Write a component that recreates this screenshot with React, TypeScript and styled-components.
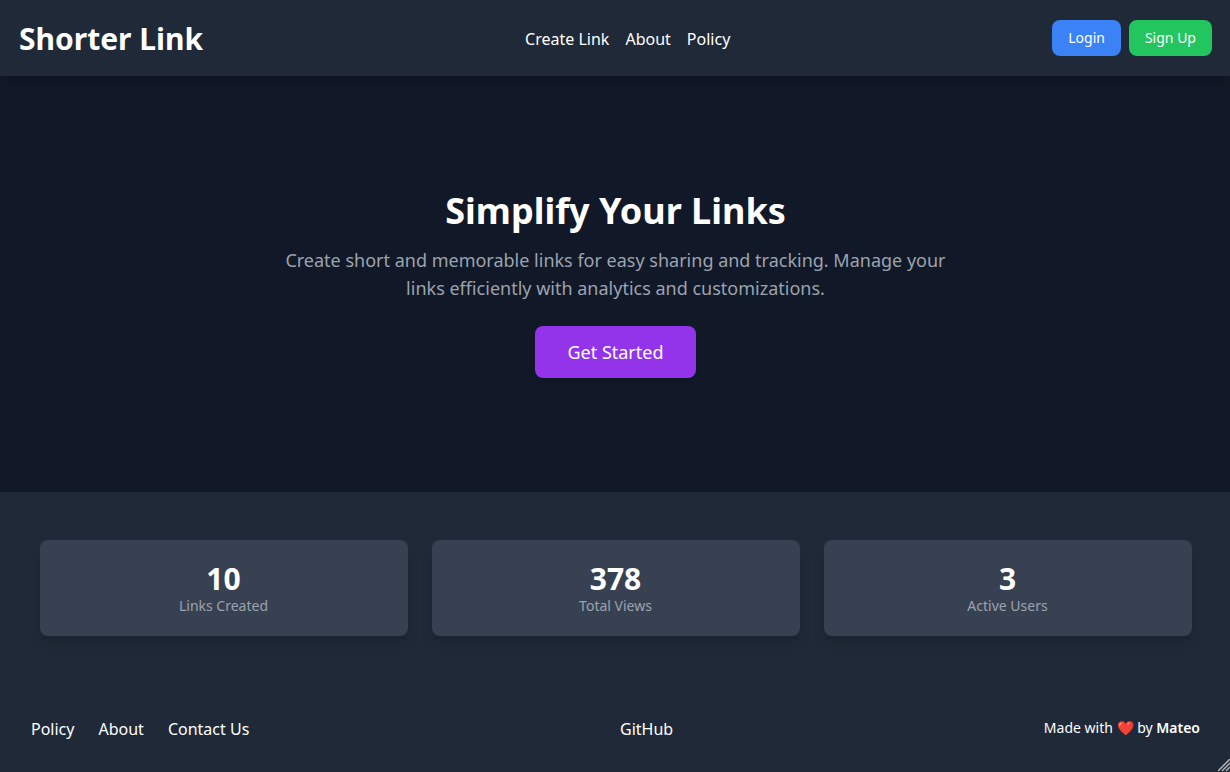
import React from "react";
import styled, { createGlobalStyle, css } from "styled-components";

const GlobalStyle = createGlobalStyle`
  *, *::before, *::after { box-sizing: border-box; }
  body {
    margin: 0;
    background: #111827;
    color: #ffffff;
    font-family: "Noto Sans", sans-serif;
    font-size: 16px;
    line-height: 24px;
  }
  h1, h2, p, dl, dt, dd { margin: 0; }
`;

const shadowLarge = "0 10px 15px -3px rgba(0, 0, 0, 0.1), 0 4px 6px -4px rgba(0, 0, 0, 0.1)";
const shadowMedium = "0 4px 6px -1px rgba(0, 0, 0, 0.1), 0 2px 4px -2px rgba(0, 0, 0, 0.1)";

const displayText = css`
  padding-top: 2px;
  font-size: 30px;
  line-height: 34px;
  font-weight: 700;
`;

const Page = styled.div`
  position: relative;
  display: flex;
  flex-direction: column;
  min-height: 100vh;
`;

const Header = styled.header`
  display: flex;
  align-items: center;
  justify-content: space-between;
  padding: 20px 18px 20px 19px;
  background: #1f2937;
  box-shadow: ${shadowLarge};
`;

const Logo = styled.h1`
  ${displayText}
`;

const LinkRow = styled.nav<{ $gap: number }>`
  display: flex;
  gap: ${(p) => p.$gap}px;
`;

const TextLink = styled.a`
  display: block;
  padding-top: 2px;
  color: inherit;
  text-decoration: none;
`;

const Actions = styled.div`
  display: flex;
  gap: 8px;
`;

const Button = styled.button<{ $color: string; $large?: boolean }>`
  border: 0;
  border-radius: 8px;
  padding: ${(p) => (p.$large ? "12px 32px" : "8px 16px")};
  background: ${(p) => p.$color};
  color: #ffffff;
  font-family: inherit;
  font-size: ${(p) => (p.$large ? 18 : 14)}px;
  line-height: ${(p) => (p.$large ? 28 : 20)}px;
  box-shadow: ${(p) => (p.$large ? shadowMedium : "none")};
  cursor: pointer;
`;

const Hero = styled.main`
  flex: 1;
  display: flex;
  flex-direction: column;
  align-items: center;
  justify-content: center;
  padding: 64px 24px 64px 25px;
  text-align: center;
`;

const HeroTitle = styled.h2`
  ${displayText}
  margin-bottom: 16px;
  font-size: 36px;
  line-height: 38px;
`;

const HeroText = styled.p`
  max-width: 672px;
  margin-bottom: 24px;
  color: #9ca3af;
  font-size: 18px;
  line-height: 28px;
`;

const Stats = styled.section`
  padding: 48px 24px 48px 25px;
  background: #1f2937;
`;

const StatGrid = styled.dl`
  display: grid;
  grid-template-columns: repeat(3, 1fr);
  gap: 24px;
  max-width: 1152px;
  margin: 0 auto;
`;

const StatCard = styled.div`
  display: flex;
  flex-direction: column-reverse;
  padding: 20px;
  border-radius: 8px;
  background: #374151;
  box-shadow: ${shadowLarge};
  text-align: center;
`;

const StatValue = styled.dd`
  ${displayText}
`;

const StatLabel = styled.dt`
  color: #9ca3af;
  font-size: 14px;
  line-height: 20px;
`;

const Footer = styled.footer`
  display: flex;
  align-items: center;
  justify-content: space-between;
  padding: 31px 30px 31px 31px;
  background: #1f2937;
`;

const Credit = styled.p`
  font-size: 14px;
  line-height: 20px;

  strong { font-weight: 600; }
`;

const ResizeGrip = styled.svg`
  position: absolute;
  right: 0;
  bottom: 0;
`;

const stats = [
  { value: "10", label: "Links Created" },
  { value: "378", label: "Total Views" },
  { value: "3", label: "Active Users" },
];

export default function App() {
  return (
    <Page>
      <GlobalStyle />
      <Header>
        <Logo>Shorter Link</Logo>
        <LinkRow $gap={16} aria-label="Main">
          <TextLink href="#create">Create Link</TextLink>
          <TextLink href="#about">About</TextLink>
          <TextLink href="#policy">Policy</TextLink>
        </LinkRow>
        <Actions>
          <Button type="button" $color="#3b82f6">Login</Button>
          <Button type="button" $color="#22c55e">Sign Up</Button>
        </Actions>
      </Header>
      <Hero>
        <HeroTitle>Simplify Your Links</HeroTitle>
        <HeroText>
          Create short and memorable links for easy sharing and tracking. Manage your links
          efficiently with analytics and customizations.
        </HeroText>
        <Button type="button" $color="#9333ea" $large>Get Started</Button>
      </Hero>
      <Stats>
        <StatGrid>
          {stats.map((s) => (
            <StatCard key={s.label}>
              <StatLabel>{s.label}</StatLabel>
              <StatValue>{s.value}</StatValue>
            </StatCard>
          ))}
        </StatGrid>
      </Stats>
      <Footer>
        <LinkRow $gap={24} aria-label="Footer">
          <TextLink href="#policy">Policy</TextLink>
          <TextLink href="#about">About</TextLink>
          <TextLink href="#contact">Contact Us</TextLink>
        </LinkRow>
        <TextLink href="#github">GitHub</TextLink>
        <Credit>
          Made with ❤️ by <strong>Mateo</strong>
        </Credit>
      </Footer>
      <ResizeGrip width="12" height="13" viewBox="0 0 12 13" aria-hidden="true">
        <path d="M0 12L12 0M4 12L12 4M8 12L12 8" fill="none" stroke="#b4b6ba" strokeWidth="1.5" />
      </ResizeGrip>
    </Page>
  );
}
